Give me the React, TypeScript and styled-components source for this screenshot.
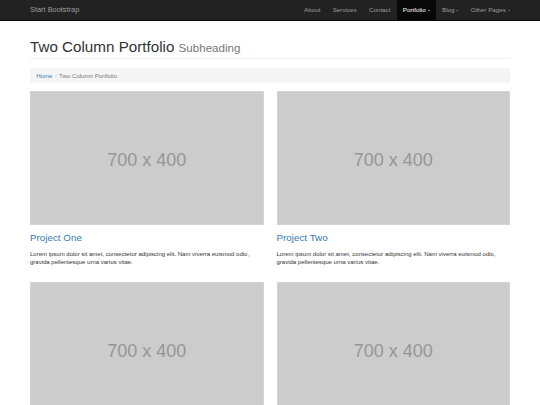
import React from 'react';
import styled, { createGlobalStyle } from 'styled-components';

// Bootstrap 3 "Two Column Portfolio" page, drawn at ~0.41 scale

interface Project {
	title: string;
	text: string;
}

const lorem = 'Lorem ipsum dolor sit amet, consectetur adipiscing elit. Nam viverra euismod odio, gravida pellentesque urna varius vitae.';

const projects: Project[] = [
	{ title: 'Project One', text: lorem },
	{ title: 'Project Two', text: lorem },
	{ title: 'Project Three', text: lorem },
	{ title: 'Project Four', text: lorem },
];

const navItems = [
	{ label: 'About' },
	{ label: 'Services' },
	{ label: 'Contact' },
	{ label: 'Portfolio', dropdown: true, active: true },
	{ label: 'Blog', dropdown: true },
	{ label: 'Other Pages', dropdown: true },
];

function App() {
	return (
		<>
			<GlobalStyle />
			<Navbar>
				<NavInner>
					<Brand href="#">Start Bootstrap</Brand>
					<NavList>
						{navItems.map((item) => (
							<NavItem key={item.label} $active={item.active}>
								{item.label}
								{item.dropdown && <Caret />}
							</NavItem>
						))}
					</NavList>
				</NavInner>
			</Navbar>
			<Container>
				<PageHeader>
					Two Column Portfolio <small>Subheading</small>
				</PageHeader>
				<Breadcrumb>
					<CrumbLink href="#">Home</CrumbLink>
					<CrumbSep>/</CrumbSep>
					<CrumbActive>Two Column Portfolio</CrumbActive>
				</Breadcrumb>
				<Grid>
					{projects.map((p) => (
						<PortfolioItem key={p.title}>
							<Placeholder>700 x 400</Placeholder>
							<ProjectTitle href="#">{p.title}</ProjectTitle>
							<ProjectText>{p.text}</ProjectText>
						</PortfolioItem>
					))}
				</Grid>
			</Container>
		</>
	);
}

export default App;

const GlobalStyle = createGlobalStyle`
	html, body {
		margin: 0;
		padding: 0;
		background: #ffffff;
		overflow: hidden;
	}
	body {
		font-family: "Liberation Sans", Arial, sans-serif;
		font-size: 6px;
		line-height: 8.2px;
		color: #333333;
	}
	* {
		box-sizing: border-box;
	}
`;

const Navbar = styled.nav`
	height: 21px;
	background-color: #222222;
	border-bottom: 1px solid #080808;
`;

const NavInner = styled.div`
	width: 480px;
	height: 20px;
	margin: 0 auto;
	display: flex;
	align-items: stretch;
	justify-content: space-between;
`;

const Brand = styled.a`
	display: flex;
	align-items: center;
	font-size: 7.4px;
	color: #9d9d9d;
	text-decoration: none;
`;

const NavList = styled.ul`
	display: flex;
	margin: 0 -6px 0 0;
	padding: 0;
	list-style: none;
`;

const NavItem = styled.li<{ $active?: boolean }>`
	display: flex;
	align-items: center;
	padding: 0 6.15px;
	font-size: 6.25px;
	color: ${(p) => (p.$active ? '#ffffff' : '#9d9d9d')};
	background-color: ${(p) => (p.$active ? '#080808' : 'transparent')};
`;

const Caret = styled.span`
	display: inline-block;
	width: 0;
	height: 0;
	margin-left: 2px;
	border-top: 1.7px solid currentColor;
	border-left: 1.7px solid transparent;
	border-right: 1.7px solid transparent;
`;

const Container = styled.div`
	width: 480px;
	margin: 0 auto;
`;

const PageHeader = styled.h1`
	margin: 18px 0 9px;
	padding-bottom: 1.7px;
	border-bottom: 1px solid #eeeeee;
	font-size: 15.2px;
	line-height: 16.2px;
	font-weight: 400;
	color: #333333;

	small {
		font-size: 11.6px;
		color: #777777;
		font-weight: 400;
	}
`;

const Breadcrumb = styled.div`
	display: flex;
	align-items: center;
	height: 15.5px;
	padding: 0 6.15px;
	margin-bottom: 8px;
	background-color: #f5f5f5;
	border-radius: 1.6px;
	font-size: 6.1px;
`;

const CrumbLink = styled.a`
	color: #337ab7;
	text-decoration: none;
`;

const CrumbSep = styled.span`
	padding: 0 2.5px;
	color: #cccccc;
`;

const CrumbActive = styled.span`
	color: #777777;
`;

const Grid = styled.div`
	display: grid;
	grid-template-columns: 1fr 1fr;
	column-gap: 13px;
`;

const PortfolioItem = styled.div`
	display: flex;
	flex-direction: column;
	margin-bottom: 16px;
`;

const Placeholder = styled.div`
	aspect-ratio: 7 / 4;
	display: flex;
	align-items: center;
	justify-content: center;
	padding-top: 4px;
	background-color: #cccccc;
	border: 1px solid #d4d4d4;
	font-size: 18px;
	color: #969696;
`;

const ProjectTitle = styled.a`
	margin: 8.2px 0 6px;
	font-size: 9.84px;
	line-height: 10.8px;
	color: #337ab7;
	text-decoration: none;
`;

const ProjectText = styled.p`
	margin: 0;
	font-size: 6px;
	line-height: 8.2px;
	color: #333333;
`;
